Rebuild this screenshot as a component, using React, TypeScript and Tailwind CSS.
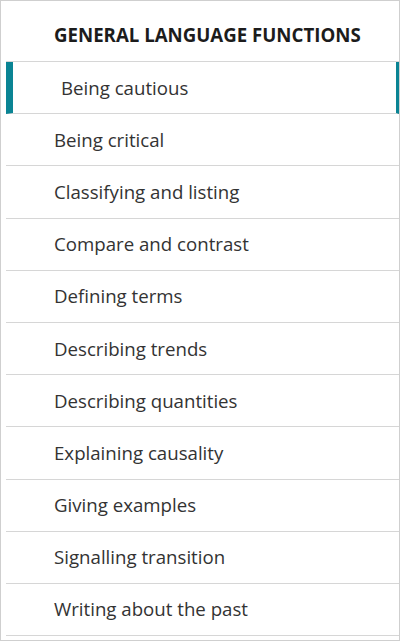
const items: string[] = [
  "Being cautious",
  "Being critical",
  "Classifying and listing",
  "Compare and contrast",
  "Defining terms",
  "Describing trends",
  "Describing quantities",
  "Explaining causality",
  "Giving examples",
  "Signalling transition",
  "Writing about the past",
];

const App = () => {
  return (
    <div className="w-[400px] h-[641px] bg-white border border-[#cfcfcf] pl-[5px] overflow-hidden font-['Open_Sans',sans-serif]">
      <h2 className="h-[60px] pl-[48px] pt-[22px] text-[18.67px] font-bold text-[#1c1c1c] leading-[24px]">
        GENERAL LANGUAGE FUNCTIONS
      </h2>
      <ul className="border-t border-[#d6d6d6]">
        {items.map((item, index) => (
          <li
            key={item}
            className={
              index === 0
                ? "h-[52.2px] flex items-center border-b border-[#d6d6d6] border-l-[7px] border-l-[#0a8494] border-r-[3px] border-r-[#0a8494] pl-[48px] text-[18.67px] text-[#333333]"
                : "h-[52.2px] flex items-center border-b border-[#d6d6d6] pl-[48px] text-[18.67px] text-[#333333]"
            }
          >
            {item}
          </li>
        ))}
      </ul>
    </div>
  );
};

export default App;
